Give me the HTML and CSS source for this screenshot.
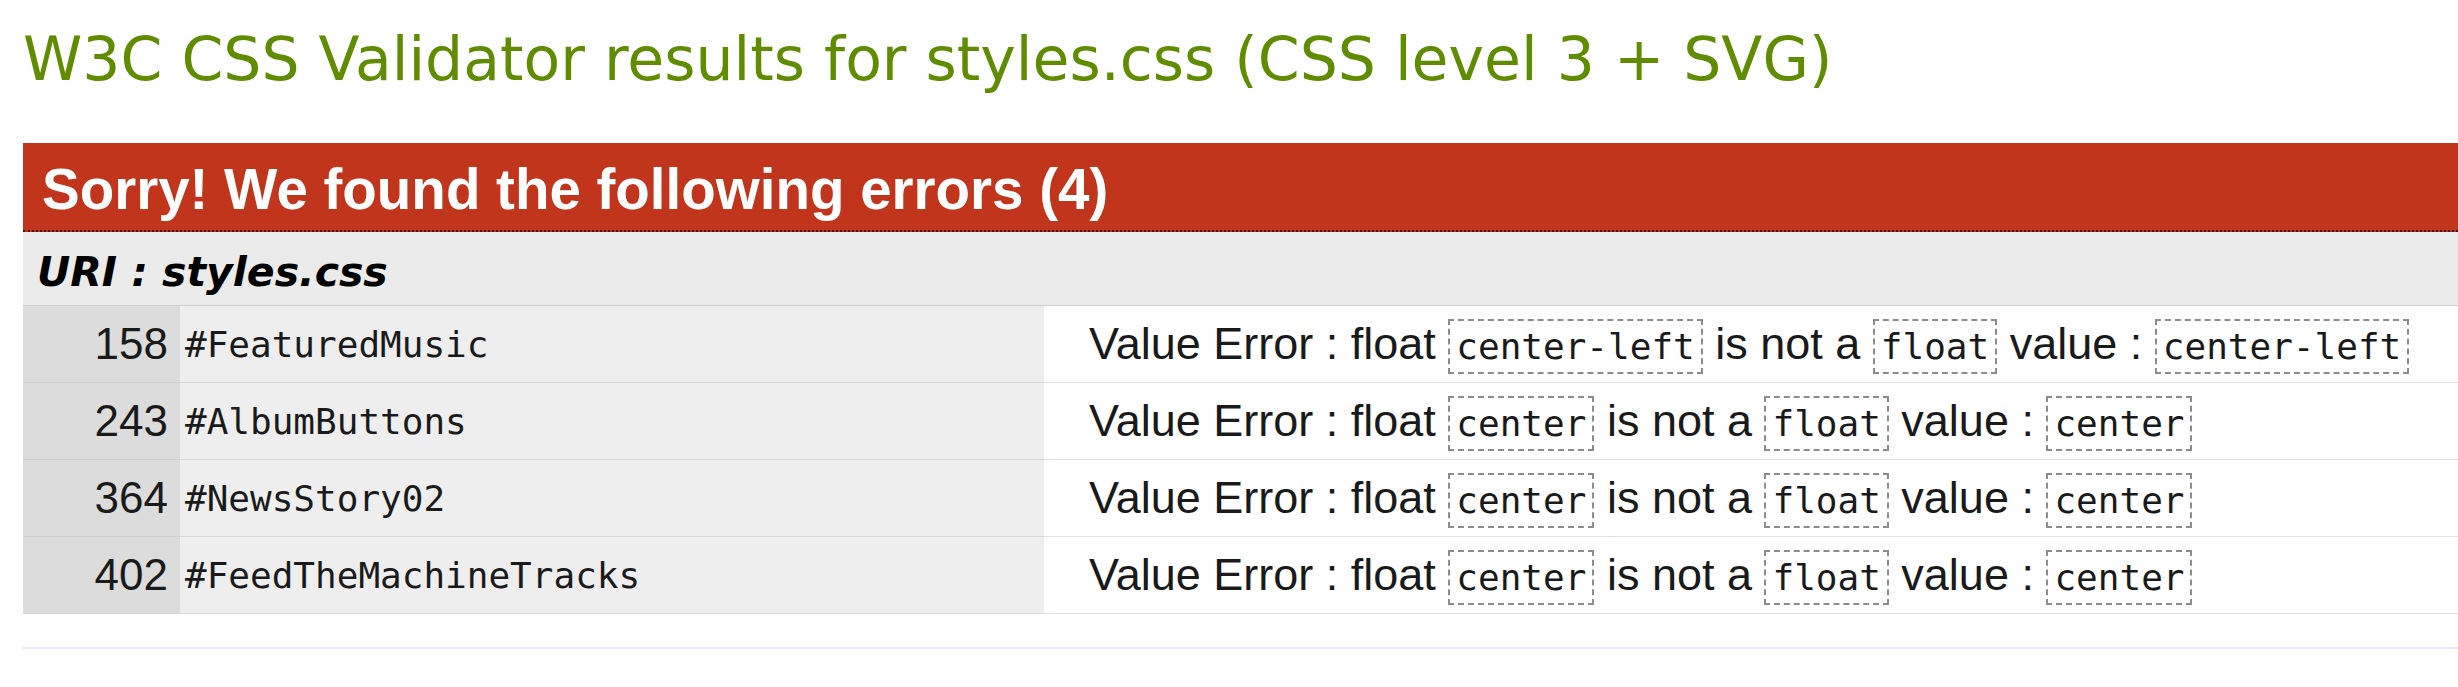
FILE: index.html
```html
<!DOCTYPE html>
<html lang="en">
<head>
<meta charset="utf-8">
<title>W3C CSS Validator results</title>
<link rel="stylesheet" href="styles.css">
</head>
<body>
<div class="page">
  <h2 class="title">W3C CSS Validator results for styles.css (CSS level 3 + SVG)</h2>
  <div class="errors">
    <h3 class="errors-head">Sorry! We found the following errors (4)</h3>
    <div class="uri">URI : styles.css</div>
    <table class="err-table">
      <colgroup>
        <col class="c-num">
        <col class="c-sel">
        <col class="c-msg">
      </colgroup>
      <tr>
        <td class="num">158</td>
        <td class="sel">#FeaturedMusic</td>
        <td class="msg">Value Error : float <code>center-left</code> is not a <code>float</code> value : <code>center-left</code></td>
      </tr>
      <tr>
        <td class="num">243</td>
        <td class="sel">#AlbumButtons</td>
        <td class="msg">Value Error : float <code>center</code> is not a <code>float</code> value : <code>center</code></td>
      </tr>
      <tr>
        <td class="num">364</td>
        <td class="sel">#NewsStory02</td>
        <td class="msg">Value Error : float <code>center</code> is not a <code>float</code> value : <code>center</code></td>
      </tr>
      <tr>
        <td class="num">402</td>
        <td class="sel">#FeedTheMachineTracks</td>
        <td class="msg">Value Error : float <code>center</code> is not a <code>float</code> value : <code>center</code></td>
      </tr>
    </table>
  </div>
  <div class="sep"></div>
</div>
</body>
</html>
```
FILE: styles.css
```css
html, body {
  margin: 0;
  padding: 0;
  background: #ffffff;
  overflow: hidden;
}

.page {
  padding-left: 23px;
}

.title {
  margin: 25px 0 0;
  font-family: "DejaVu Sans", Verdana, sans-serif;
  font-weight: normal;
  font-size: 60px;
  line-height: 69px;
  color: #5f8c00;
  white-space: nowrap;
}

.errors {
  margin-top: 49px;
}

.errors-head {
  margin: 0;
  padding: 14px 0 8px 19px;
  background: #c1351d;
  color: #ffffff;
  font-family: "Liberation Sans", Arial, sans-serif;
  font-weight: bold;
  font-size: 56.5px;
  line-height: 65px;
  border-bottom: 2px dotted #3a1208;
  white-space: nowrap;
}

.uri {
  padding: 18px 0 10px 14px;
  background: #ebebeb;
  border-bottom: 1px solid #cfcfcf;
  font-family: "DejaVu Sans", Verdana, sans-serif;
  font-weight: bold;
  font-style: italic;
  font-size: 41px;
  line-height: 45px;
  color: #000000;
}

.err-table {
  width: 100%;
  border-collapse: collapse;
  table-layout: fixed;
}

.c-num { width: 157px; }
.c-sel { width: 864px; }

.err-table td {
  height: 76px;
  padding: 0;
  vertical-align: middle;
  white-space: nowrap;
  color: #1a1a1a;
}

.num {
  background: #dcdcdc;
  border-bottom: 1px solid #cfcfcf;
  text-align: right;
  padding-right: 12px !important;
  font-family: "Liberation Sans", Arial, sans-serif;
  font-size: 44px;
}

.sel {
  background: #eeeeee;
  border-bottom: 1px solid #d6d6d6;
  padding-left: 5px !important;
  font-family: "DejaVu Sans Mono", monospace;
  font-size: 36px;
}

.msg {
  background: #ffffff;
  border-bottom: 1px solid #e4dde2;
  padding-left: 45px !important;
  font-family: "Liberation Sans", Arial, sans-serif;
  font-size: 45px;
}

.msg code {
  font-family: "DejaVu Sans Mono", monospace;
  font-size: 36px;
  padding: 5px 6px;
  border: 2px dashed #8c8c8c;
}

.sep {
  margin-top: 33px;
  height: 2px;
  background: #e8e8f6;
}
```
